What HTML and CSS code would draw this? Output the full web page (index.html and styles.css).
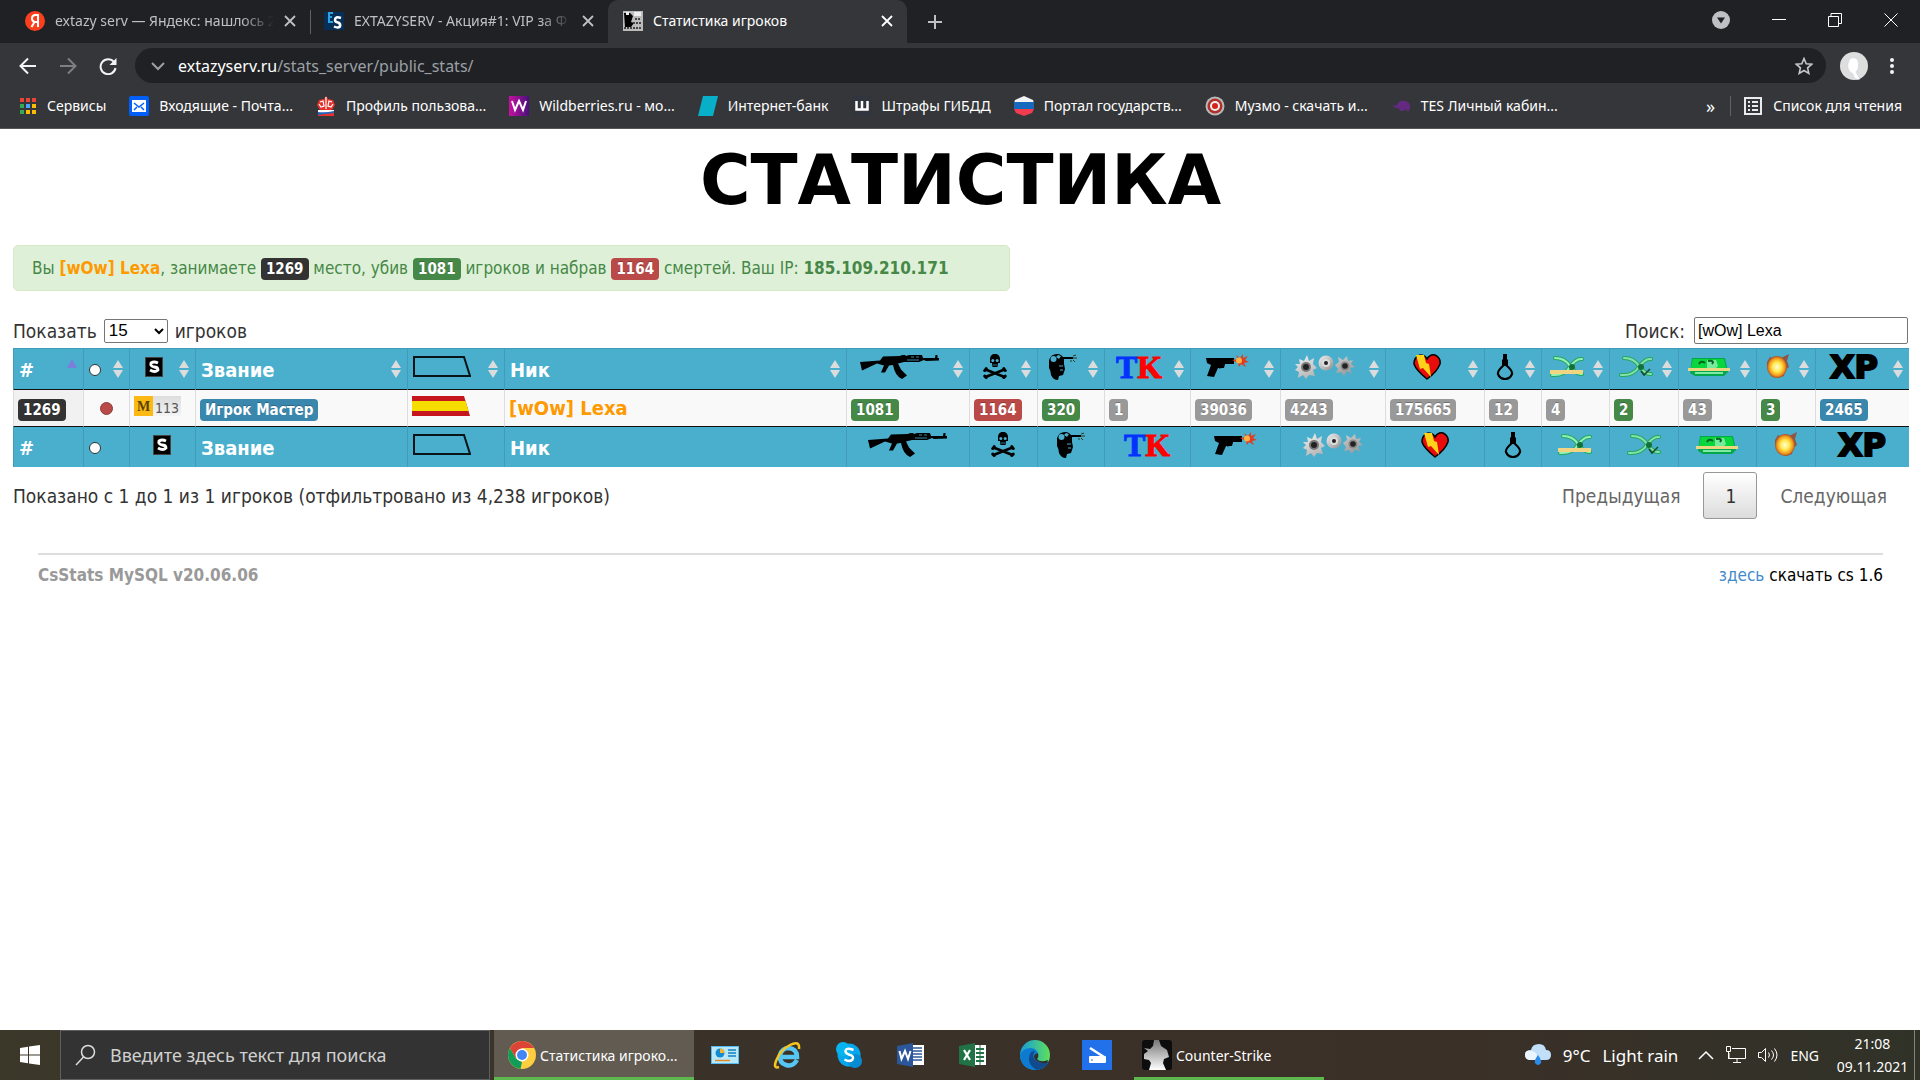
FILE: index.html
```html
<!DOCTYPE html>
<html lang="ru">
<head>
    <meta charset="UTF-8">
    <meta name="viewport" content="width=device-width, initial-scale=1.0">
    <title>Статистика игроков</title>
    <link rel="stylesheet" href="styles.css">
</head>
<body>
    <!-- Shared icons -->
    <svg class="sprite" aria-hidden="true">
        <defs>
            <linearGradient id="flash" x1="0" y1="0" x2="1" y2="1"><stop offset="0" stop-color="#f2f2f2"/><stop offset="1" stop-color="#8c8c8c"/></linearGradient>
            <radialGradient id="fire"><stop offset="0" stop-color="#fffde0"/><stop offset=".45" stop-color="#ffe94a"/><stop offset=".8" stop-color="#f2951c"/><stop offset="1" stop-color="#a3502c"/></radialGradient>
        </defs>
        <symbol id="close" viewBox="0 0 12 12"><path d="M1 1l10 10M11 1L1 11" stroke="currentColor" stroke-width="1.8"/></symbol>
        <symbol id="sort" viewBox="0 0 10 20"><path d="M5 1l5 8H0zM5 19l5-8H0z" fill="#dcdcdc"/></symbol>
        <symbol id="sort-asc" viewBox="0 0 10 20"><path d="M5 0l5 9H0z" fill="#7a7fdc"/></symbol>
        <symbol id="dot" viewBox="0 0 12 12"><circle cx="6" cy="6" r="5.5" fill="#fff" stroke="#333"/></symbol>
        <symbol id="steam" viewBox="0 0 18 20"><path fill="#444" d="M0 0h18v20H0z"/><path fill="#000" d="M1 1h16v18H1z"/><path d="M13 6q-4-2-7 0-1 3 3 4 4 0 4 3-3 3-8 0" fill="none" stroke="#fff" stroke-width="2.800"/></symbol>
        <symbol id="country" viewBox="0 0 58 21"><path d="M1 1h50l6 19H1z" fill="none" stroke="#081418" stroke-width="2"/></symbol>
        <symbol id="ak" viewBox="0 0 79 24"><path d="M0 7l20-1.500 3-4 17-.5L42 0h3l1 1 3-1h13l1 3h12l.5-3h2v3H79v2.500l-13 .5-2-1-5 2H44l-6 1.500 3 6 6 6-5 3.500q-7-3-9-14l-4 .5-4 7h-4l3-7-7-2L2 15.500z"/><path d="M51 2h3M56 2h3M47 5h12" stroke="#49afcd" stroke-width=".8"/></symbol>
        <symbol id="skull" viewBox="0 0 24 25"><path d="M7 5c0-7 10-7 10 0v4h-2l-.5 4h-5L9 9H7z"/><circle cx="9.800" cy="6.500" r="1.500" fill="#49afcd"/><circle cx="14.200" cy="6.500" r="1.500" fill="#49afcd"/><path d="M10 11h4M8 12.500q4 4 8 0" stroke="#49afcd" stroke-width=".7" fill="none"/><path d="M2.500 15.500l19 7.500M21.500 15.500l-19 7.500" stroke="#000" stroke-width="2.600" stroke-linecap="round"/><g><circle cx="1.800" cy="16.500" r="1.600"/><circle cx="3.200" cy="14.500" r="1.500"/><circle cx="22.200" cy="16.500" r="1.600"/><circle cx="20.800" cy="14.500" r="1.500"/><circle cx="1.800" cy="22" r="1.600"/><circle cx="3.200" cy="23.500" r="1.500"/><circle cx="22.200" cy="22" r="1.600"/><circle cx="20.800" cy="23.500" r="1.500"/></g></symbol>
        <symbol id="headshot" viewBox="0 0 28 26"><path d="M0 6q2-6 8-6 5 0 7 5l0 5 1 5-2 6-4 1-1 4q-5 0-7-5 0-4-2-7z"/><circle cx="4.500" cy="5" r="3" fill="#49afcd"/><path d="M7 3l2-2 3 1-2 3z" fill="#49afcd"/><path d="M10 12h4M11 16h3" stroke="#49afcd"/><path d="M13 4h11" stroke="#000" stroke-width="2"/><path d="M24 2l3-1M24 4h4M24 6l2 2M22 6v2" stroke="#2a3a1c"/></symbol>
        <symbol id="pistol" viewBox="0 0 45 25"><path d="M1 4h28v6h-9l-1 4h-6l-4 9-7-1 4-11-4-2z"/><path d="M19 10q0 4-5 4" fill="none" stroke="#000"/><path d="M27 6l6-1-2-4 4 3 3-4v4l5-2-3 4 4 2-5 1 2 4-5-3-2 3-1-4z" fill="#e03c22"/><circle cx="34" cy="6.500" r="3" fill="#ffb040"/></symbol>
        <symbol id="hit" viewBox="0 0 60 24"><path d="M0 9l5 0-1-5 5 2 3-6 2 6 5-3-1 6 4 4-4 2 2 6-6-1-3 4-3-4-5 3 1-6-4-2 3-3zM40 10l4-3-1-5 5 3 4-4 1 5 5-1-2 4 4 3-5 1 2 6-5-3-3 5-3-4-5 1 2-4z" fill="url(#flash)"/><circle cx="31" cy="8" r="7.500" fill="url(#flash)"/><circle cx="31" cy="8" r="4" fill="#ddd"/><circle cx="11" cy="12" r="5" fill="#777"/><circle cx="11" cy="12" r="3" fill="#222"/><circle cx="31" cy="8" r="2" fill="#222"/><circle cx="50" cy="11" r="4.500" fill="#888"/><circle cx="50" cy="11" r="2.800" fill="#222"/></symbol>
        <symbol id="heart" viewBox="0 0 28 26"><path d="M14 25Q3 16 1 10q0-7 6-9 5 0 7 4 3-5 8-4 6 3 5 9-3 8-13 15z" fill="#e80c0c" stroke="#000" stroke-width="1.500"/><path d="M3 1h8l2 8 3 1 2 13-8-9-3 1z" fill="#ffd31a"/></symbol>
        <symbol id="noose" viewBox="0 0 18 27"><path d="M7 1h4v5l1 1v6H6V7l1-1z"/><path d="M8 12q-7 6-6 9 2 5 7 5t7-5q1-3-6-9" fill="none" stroke="#000" stroke-width="2.200"/></symbol>
        <symbol id="plant" viewBox="0 0 34 22"><path d="M5 2q10 0 15 8 7 9 12 8M2 19q12 1 18-8 6-9 12-8" fill="none" stroke="#21a85a" stroke-width="4" stroke-linecap="round"/><path d="M5 2q10 0 15 8 7 9 12 8M2 19q12 1 18-8 6-9 12-8" fill="none" stroke="#96efb8" stroke-width="2" stroke-linecap="round"/><circle cx="22" cy="11" r="3" fill="#13703b"/><path d="M0 14h33v4H0z" fill="#f2d583"/></symbol>
        <symbol id="defuse" viewBox="0 0 34 22"><path d="M5 2q10 0 15 8 7 9 12 8M2 19q12 1 18-8 6-9 12-8" fill="none" stroke="#21a85a" stroke-width="4" stroke-linecap="round"/><path d="M5 2q10 0 15 8 7 9 12 8M2 19q12 1 18-8 6-9 12-8" fill="none" stroke="#86e0ad" stroke-width="2" stroke-linecap="round"/><circle cx="22" cy="11" r="3" fill="#13703b"/><path d="M22 15l3 4 6-6" fill="none" stroke="#174a2b" stroke-width="1.500"/></symbol>
        <symbol id="cash" viewBox="0 0 42 20"><path d="M4 1h33l3 14-4 4H7l-5-3z" fill="#04a84a"/><path d="M5 2h31l2 9H3z" fill="#08d63c"/><path d="M19 3h9l2 6-3 3h-8z" fill="#74eb9d"/><path d="M11 7q2-4 6-1M20 4q7-1 4 3" stroke="#066222" fill="none" stroke-width="2"/><path d="M7 16h28" stroke="#7deaa4" stroke-width="2"/><path d="M0 11h42v3H0z" fill="#ead782"/></symbol>
        <symbol id="explode" viewBox="0 0 24 25"><path d="M1 8l3-5 4 2 4-3 3 2 8-4-2 7 2 6-4 3-1 6-6 2-6-2-1-5-4-3z" fill="#8e5645"/><ellipse cx="11" cy="13" rx="10" ry="11" fill="url(#fire)"/></symbol>
    </svg>

    <header class="browser">
        <div class="tab-strip">
            <div class="tab">
                <svg width="20" height="20" viewBox="0 0 20 20"><circle cx="10" cy="10" r="10" fill="#fc3f1d"/><path d="M13 16V4h-2.500Q7 4 7 7.500q0 2.500 2.500 3.500L6.500 16M9.500 11H13" fill="none" stroke="#fff" stroke-width="2"/></svg>
                <span class="tab-title faded">extazy serv — Яндекс: нашлось 2</span>
                <button class="tab-close" aria-label="Закрыть"><svg width="12" height="12"><use href="#close"/></svg></button>
            </div>
            <div class="tab second">
                <svg width="20" height="20" viewBox="0 0 20 20"><path fill="#062f57" d="M0 1h20v18H0z"/><path d="M9 2H5v9h4M5 6h3" fill="none" stroke="#2ba2e2" stroke-width="2"/><path d="M17 7q-6-2-6 2 0 2 3 2.500 3 1 2 4-2 2-6 0" fill="none" stroke="#fff" stroke-width="2.500"/></svg>
                <span class="tab-title faded">EXTAZYSERV - Акция#1: VIP за Ф</span>
                <button class="tab-close" aria-label="Закрыть"><svg width="12" height="12"><use href="#close"/></svg></button>
            </div>
            <div class="tab active">
                <svg width="20" height="20" viewBox="0 0 20 20"><path fill="#bbb" d="M0 0h20v20H0z"/><path d="M1 2h6l3 3-2 6 3 1-3 4H2z"/><path d="M3 1h3v3H3zM11 1h7v4h-7z" fill="#eee"/><path d="M12 8h6M10 12h8M1 17h18" stroke="#444" stroke-width="2" stroke-dasharray="2 1"/></svg>
                <span class="tab-title">Статистика игроков</span>
                <button class="tab-close" aria-label="Закрыть"><svg width="12" height="12"><use href="#close"/></svg></button>
            </div>
            <button class="new-tab" aria-label="Новая вкладка"><svg width="16" height="16" viewBox="0 0 16 16"><path d="M8 1v14M1 8h14" stroke="#bdc1c6" stroke-width="2"/></svg></button>
            <div class="window-controls">
                <button aria-label="Поиск вкладок"><svg width="18" height="18" viewBox="0 0 18 18"><circle cx="9" cy="9" r="9" fill="#bdc1c6"/><path d="M5 6.500h8L9 12.500z" fill="#202124"/></svg></button>
                <button aria-label="Свернуть"><svg width="14" height="14" viewBox="0 0 14 14"><path d="M0 6.500h14" stroke="#fff" stroke-width="1"/></svg></button>
                <button aria-label="Восстановить"><svg width="14" height="14" viewBox="0 0 14 14"><path d="M.5 3.500h10v10H.5zM3 3V.5h10.500v10H11" fill="none" stroke="#fff"/></svg></button>
                <button aria-label="Закрыть окно"><svg width="14" height="14" viewBox="0 0 14 14"><path d="M.5.5l13 13m0-13l-13 13" stroke="#fff"/></svg></button>
            </div>
        </div>

        <div class="toolbar">
            <button aria-label="Назад"><svg width="18" height="18" viewBox="0 0 18 18"><path d="M17 9H2M9 1.500L1.500 9 9 16.500" fill="none" stroke="#f1f3f4" stroke-width="2"/></svg></button>
            <button aria-label="Вперёд"><svg width="18" height="18" viewBox="0 0 18 18"><path d="M1 9h15M9 1.500L16.500 9 9 16.500" fill="none" stroke="#7d7f83" stroke-width="2"/></svg></button>
            <button aria-label="Обновить"><svg width="18" height="18" viewBox="0 0 18 18"><path d="M15 5A7.500 7.500 0 1 0 16.500 11" fill="none" stroke="#f1f3f4" stroke-width="2"/><path d="M17.500 1v7h-7z" fill="#f1f3f4"/></svg></button>
            <a class="omnibox" href="#">
                <svg width="14" height="14" viewBox="0 0 14 14"><path d="M1 4l6 6 6-6" fill="none" stroke="#9aa0a6" stroke-width="2"/></svg>
                <span class="url"><b>extazyserv.ru</b>/stats_server/public_stats/</span>
                <svg width="18" height="18" viewBox="0 0 18 18"><path d="M9 1.500l2.200 5.200 5.600.5-4.200 3.700 1.200 5.500L9 13.500l-4.800 2.900 1.200-5.500L1.200 7.200l5.600-.5z" fill="none" stroke="#c4c7cc" stroke-width="1.600"/></svg>
            </a>
            <button aria-label="Профиль"><svg width="28" height="28" viewBox="0 0 28 28"><circle cx="14" cy="14" r="14" fill="#dedede"/><path d="M9 8q4-5 9 0 2 8-2 12l4 7q-6 2-7-5-8-4-4-14z" fill="#fff" stroke="#ccd4e0" stroke-width=".7"/></svg></button>
            <button aria-label="Меню"><svg width="4" height="18" viewBox="0 0 4 18"><circle cx="2" cy="3" r="2" fill="#f1f3f4"/><circle cx="2" cy="9" r="2" fill="#f1f3f4"/><circle cx="2" cy="15" r="2" fill="#f1f3f4"/></svg></button>
        </div>

        <nav class="bookmarks">
            <a href="#"><svg width="18" height="18" viewBox="0 0 18 18"><path fill="#ea4335" d="M1 1h4v4H1zM7 1h4v4H7zM13 1h4v4h-4z"/><path fill="#34a853" d="M1 7h4v4H1zM1 13h4v4H1z"/><path fill="#4aa3ff" d="M7 7h4v4H7z"/><path fill="#fbbc04" d="M13 7h4v4h-4zM7 13h4v4H7zM13 13h4v4h-4z"/></svg>Сервисы</a>
            <a href="#"><svg width="20" height="20" viewBox="0 0 20 20"><rect width="20" height="20" rx="2" fill="#005ff9"/><path fill="#fff" d="M3 4h14v12H3z"/><path d="M5 7l5 4 5-4M5 14l3-3M15 14l-3-3" fill="none" stroke="#005ff9" stroke-width="1.500"/></svg>Входящие - Почта...</a>
            <a href="#"><svg width="20" height="20" viewBox="0 0 20 20"><path d="M10 0l2 3 5 1 2 5-3 5H4L1 9l2-5 5-1z" fill="#e5332c"/><path d="M10 1v12M4 6l3-1 1 5-3 1-2-3M16 6l-3-1-1 5 3 1 2-3" fill="none" stroke="#fff" stroke-width="1.200"/><path d="M2 14h16v2l-16 2z" fill="#fff"/><path d="M2 16q8 1 16-1v3q-8 0-16 1z" fill="#2764ba"/><path d="M2 19l16-2v3H2z" fill="#e5332c"/></svg>Профиль пользова...</a>
            <a href="#"><svg width="20" height="20" viewBox="0 0 20 20"><defs><linearGradient id="wb"><stop offset="0" stop-color="#c610a0"/><stop offset="1" stop-color="#49107b"/></linearGradient></defs><path fill="url(#wb)" d="M0 0h20v20H0z"/><path d="M3 5l3 9 4-9 4 9 3-9" fill="none" stroke="#fff" stroke-width="2"/></svg>Wildberries.ru - мо...</a>
            <a href="#"><svg width="20" height="20" viewBox="0 0 20 20"><path fill="#08afc9" d="M5 0h15l-5 20H0z"/></svg>Интернет-банк</a>
            <a href="#"><svg width="20" height="20" viewBox="0 0 20 20"><rect width="20" height="20" rx="3" fill="#30353e"/><path d="M4.500 5v8.500h11V5M10 5v8" fill="none" stroke="#fff" stroke-width="2.500"/></svg>Штрафы ГИБДД</a>
            <a href="#"><svg width="20" height="20" viewBox="0 0 20 20"><path d="M10 0l9 4 1 3H0l1-3z" fill="#f4f4f4"/><path fill="#1769bd" d="M0 6h20v7H0z"/><path d="M0 13h20l-2 4-8 3-8-3z" fill="#ef3d4f"/></svg>Портал государств...</a>
            <a href="#"><svg width="20" height="20" viewBox="0 0 20 20"><circle cx="10" cy="10" r="9.500" fill="#b9b9b9"/><circle cx="10" cy="10" r="7.500" fill="#b2302a"/><circle cx="10" cy="10" r="5" fill="#eee"/><circle cx="10" cy="10" r="3" fill="#d4211c"/></svg>Музмо - скачать и...</a>
            <a href="#"><svg width="20" height="20" viewBox="0 0 20 20"><path d="M1 7q1 4 5 2 2-5 8-4 6 1 5 7l-1 3h-2l-1-2-3 2h-3l-1-3q-6 1-7-5z" fill="#642a82"/></svg>TES Личный кабин...</a>
            <button class="more" aria-label="Другие закладки">»</button>
            <a class="reading-list" href="#"><svg width="20" height="20" viewBox="0 0 20 20"><path d="M2 2h16v16H2zM5 6h2M5 10h2M5 14h2M9 6h6M9 10h6M9 14h6" fill="none" stroke="#e8eaed" stroke-width="2"/></svg>Список для чтения</a>
        </nav>
    </header>

    <main>
        <h1>СТАТИСТИКА</h1>

        <div class="alert">
            Вы <strong class="nick">[wOw] Lexa</strong>, занимаете <span class="label black">1269</span> место, убив <span class="label green">1081</span> игроков и набрав <span class="label red">1164</span> смертей. Ваш IP: <strong>185.109.210.171</strong>
        </div>

        <div class="table-controls">
            <label>Показать
                <select>
                    <option>15</option>
                    <option>50</option>
                </select>
                игроков</label>
            <label>Поиск: <input type="text" value="[wOw] Lexa"></label>
        </div>

        <table>
            <colgroup>
                <col class="w-place"><col class="w-online"><col class="w-steam"><col class="w-rank"><col class="w-flag"><col class="w-nick"><col class="w-kills"><col class="w-deaths"><col class="w-heads"><col class="w-tk"><col class="w-shots"><col class="w-hits"><col class="w-damage"><col class="w-suicide"><col class="w-defusing"><col class="w-defused"><col class="w-planted"><col class="w-explode"><col class="w-xp">
            </colgroup>
            <thead>
                <tr>
                    <th><button><span class="name">#</span><svg class="arrow"><use href="#sort-asc"/></svg></button></th>
                    <th><button><span class="name"><svg width="12" height="12"><use href="#dot"/></svg></span><svg class="arrow"><use href="#sort"/></svg></button></th>
                    <th><button><span class="icon"><svg width="18" height="20"><use href="#steam"/></svg></span><svg class="arrow"><use href="#sort"/></svg></button></th>
                    <th><button><span class="name">Звание</span><svg class="arrow"><use href="#sort"/></svg></button></th>
                    <th><button><span class="name flag"><svg width="58" height="21"><use href="#country"/></svg></span><svg class="arrow"><use href="#sort"/></svg></button></th>
                    <th><button><span class="name">Ник</span><svg class="arrow"><use href="#sort"/></svg></button></th>
                    <th><button><span class="icon"><svg width="79" height="24"><use href="#ak"/></svg></span><svg class="arrow"><use href="#sort"/></svg></button></th>
                    <th><button><span class="icon"><svg width="24" height="25"><use href="#skull"/></svg></span><svg class="arrow"><use href="#sort"/></svg></button></th>
                    <th><button><span class="icon"><svg width="28" height="26"><use href="#headshot"/></svg></span><svg class="arrow"><use href="#sort"/></svg></button></th>
                    <th><button><span class="icon tk"><i>T</i>K</span><svg class="arrow"><use href="#sort"/></svg></button></th>
                    <th><button><span class="icon"><svg width="45" height="25"><use href="#pistol"/></svg></span><svg class="arrow"><use href="#sort"/></svg></button></th>
                    <th><button><span class="icon"><svg width="60" height="24"><use href="#hit"/></svg></span><svg class="arrow"><use href="#sort"/></svg></button></th>
                    <th><button><span class="icon"><svg width="28" height="26"><use href="#heart"/></svg></span><svg class="arrow"><use href="#sort"/></svg></button></th>
                    <th><button><span class="icon"><svg width="18" height="27"><use href="#noose"/></svg></span><svg class="arrow"><use href="#sort"/></svg></button></th>
                    <th><button><span class="icon"><svg width="34" height="22"><use href="#plant"/></svg></span><svg class="arrow"><use href="#sort"/></svg></button></th>
                    <th><button><span class="icon"><svg width="34" height="22"><use href="#defuse"/></svg></span><svg class="arrow"><use href="#sort"/></svg></button></th>
                    <th><button><span class="icon"><svg width="42" height="20"><use href="#cash"/></svg></span><svg class="arrow"><use href="#sort"/></svg></button></th>
                    <th><button><span class="icon"><svg width="24" height="25"><use href="#explode"/></svg></span><svg class="arrow"><use href="#sort"/></svg></button></th>
                    <th><button><span class="icon xp">XP</span><svg class="arrow"><use href="#sort"/></svg></button></th>
                </tr>
            </thead>
            <tbody>
                <tr>
                    <td class="sorted"><span class="label black">1269</span></td>
                    <td class="online"><svg width="13" height="13" viewBox="0 0 13 13"><circle cx="6.500" cy="6.500" r="6" fill="#b94a48" stroke="#8d3c3a"/></svg></td>
                    <td><span class="skill"><b>M</b>113</span></td>
                    <td><span class="label blue">Игрок Мастер</span></td>
                    <td><svg class="spain" width="58" height="20" viewBox="0 0 58 20"><path d="M0 0h52l6 20H0z" fill="#c4161c"/><path d="M0 5h53.500l3 10H0z" fill="#f5dd00"/></svg></td>
                    <td><strong class="nick">[wOw] Lexa</strong></td>
                    <td><span class="label green">1081</span></td>
                    <td><span class="label red">1164</span></td>
                    <td><span class="label green">320</span></td>
                    <td><span class="label">1</span></td>
                    <td><span class="label">39036</span></td>
                    <td><span class="label">4243</span></td>
                    <td><span class="label">175665</span></td>
                    <td><span class="label">12</span></td>
                    <td><span class="label">4</span></td>
                    <td><span class="label green">2</span></td>
                    <td><span class="label">43</span></td>
                    <td><span class="label green">3</span></td>
                    <td><span class="label blue">2465</span></td>
                </tr>
            </tbody>
            <tfoot>
                <tr>
                    <th><div><span class="name">#</span></div></th>
                    <th><div><span class="name"><svg width="12" height="12"><use href="#dot"/></svg></span></div></th>
                    <th><div><span class="icon"><svg width="18" height="20"><use href="#steam"/></svg></span></div></th>
                    <th><div><span class="name">Звание</span></div></th>
                    <th><div><span class="name flag"><svg width="58" height="21"><use href="#country"/></svg></span></div></th>
                    <th><div><span class="name">Ник</span></div></th>
                    <th><div><span class="icon"><svg width="79" height="24"><use href="#ak"/></svg></span></div></th>
                    <th><div><span class="icon"><svg width="24" height="25"><use href="#skull"/></svg></span></div></th>
                    <th><div><span class="icon"><svg width="28" height="26"><use href="#headshot"/></svg></span></div></th>
                    <th><div><span class="icon tk"><i>T</i>K</span></div></th>
                    <th><div><span class="icon"><svg width="45" height="25"><use href="#pistol"/></svg></span></div></th>
                    <th><div><span class="icon"><svg width="60" height="24"><use href="#hit"/></svg></span></div></th>
                    <th><div><span class="icon"><svg width="28" height="26"><use href="#heart"/></svg></span></div></th>
                    <th><div><span class="icon"><svg width="18" height="27"><use href="#noose"/></svg></span></div></th>
                    <th><div><span class="icon"><svg width="34" height="22"><use href="#plant"/></svg></span></div></th>
                    <th><div><span class="icon"><svg width="34" height="22"><use href="#defuse"/></svg></span></div></th>
                    <th><div><span class="icon"><svg width="42" height="20"><use href="#cash"/></svg></span></div></th>
                    <th><div><span class="icon"><svg width="24" height="25"><use href="#explode"/></svg></span></div></th>
                    <th><div><span class="icon xp">XP</span></div></th>
                </tr>
            </tfoot>
        </table>

        <div class="table-footer">
            <div class="info">Показано с 1 до 1 из 1 игроков (отфильтровано из 4,238 игроков)</div>
            <div class="pagination">
                <button>Предыдущая</button>
                <button class="current">1</button>
                <button>Следующая</button>
            </div>
        </div>

        <footer>
            <strong>CsStats MySQL v20.06.06</strong>
            <span><a href="#">здесь</a> скачать cs 1.6</span>
        </footer>
    </main>

    <div class="taskbar">
        <button class="start" aria-label="Пуск"><svg width="20" height="20" viewBox="0 0 20 20"><path fill="#fff" d="M0 3l8-1.200v7.700H0zM9 1.600L20 0v9.500H9zM0 10.500h8v7.700L0 17zM9 10.500h11V20L9 18.400z"/></svg></button>
        <label class="task-search">
            <svg width="22" height="22" viewBox="0 0 22 22"><circle cx="13" cy="8" r="6.500" fill="none" stroke="#ddd" stroke-width="1.500"/><path d="M8.500 13L1 21" stroke="#ddd" stroke-width="1.500"/></svg>
            <input type="text" placeholder="Введите здесь текст для поиска" aria-label="Поиск">
        </label>
        <button class="task-window chrome">
            <svg width="28" height="28" viewBox="0 0 28 28"><circle cx="14" cy="14" r="14" fill="#ffcd40"/><path d="M1.900 7A14 14 0 0 1 26.100 7H14L8 17.500z" fill="#db4437"/><path d="M1.900 7L8 17.500 14 21l-1.500 6.900A14 14 0 0 1 1.900 7z" fill="#0f9d58"/><circle cx="14" cy="14" r="6.500" fill="#fff"/><circle cx="14" cy="14" r="5" fill="#4285f4"/></svg>
            Статистика игроко...
        </button>
        <div class="pinned">
            <button aria-label="Панель управления"><svg width="30" height="30" viewBox="0 0 30 30"><path fill="#51bdf0" d="M1 6h28v18H1z"/><path fill="#b9e8fa" d="M2 7h26v16H2z"/><circle cx="10" cy="13" r="4.500" fill="#178bd0"/><path d="M10 8.500V13h4.500A4.500 4.500 0 0 0 10 8.500z" fill="#f6b52b"/><path d="M18 10h8M18 13h8M18 16h8" stroke="#1580bf" stroke-width="1.500"/><path d="M5 20.500h15" stroke="#e08c2c" stroke-width="1.500"/></svg></button>
            <button aria-label="Internet Explorer"><svg width="30" height="30" viewBox="0 0 30 30"><path d="M25 20q-4 7-11 5-7-2-6-10 2-7 9-7 8 1 8 9H9" fill="none" stroke="#56c6f2" stroke-width="4.500"/><path d="M7 27q-6 2-3-6Q8 10 18 5q10-5 9 4" fill="none" stroke="#f7c51e" stroke-width="2.500"/></svg></button>
            <button aria-label="Skype"><svg width="30" height="30" viewBox="0 0 30 30"><circle cx="15" cy="15" r="11.500" fill="#06a7ec"/><circle cx="9" cy="9" r="7" fill="#06b5f0"/><circle cx="21" cy="21" r="7" fill="#078bd2"/><path d="M19.500 10q-8-3-8 1.500 0 2 4 3.200 5 1.300 3 4.800-3 3-8 0" fill="none" stroke="#fff" stroke-width="2.500"/></svg></button>
            <button aria-label="Word"><svg width="30" height="30" viewBox="0 0 30 30"><path fill="#fff" d="M15 5h13v20H15z"/><path d="M17 8h9M17 11h9M17 14h9M17 17h9M17 20h9" stroke="#2b579a" stroke-width="1.500"/><path fill="#2b579a" d="M1 6l16-3v24L1 24z"/><path d="M3.500 11l2 8L9 11l3 8 2.500-8" fill="none" stroke="#fff" stroke-width="2"/></svg></button>
            <button aria-label="Excel"><svg width="30" height="30" viewBox="0 0 30 30"><path fill="#fff" d="M15 5h13v20H15z"/><path d="M18 9h8M18 13h8M18 17h8M18 21h8" stroke="#217346" stroke-width="2"/><path fill="#217346" d="M1 6l16-3v24L1 24zM21.500 5h1v20h-1z"/><path d="M6 10l6 10M12 10L6 20" stroke="#fff" stroke-width="2.200"/></svg></button>
            <button aria-label="Edge"><svg width="30" height="30" viewBox="0 0 30 30"><defs><linearGradient id="edge"><stop offset="0" stop-color="#159bdd"/><stop offset="1" stop-color="#5fe05a"/></linearGradient></defs><circle cx="15" cy="15" r="15" fill="url(#edge)"/><path d="M0 15Q3 8 11 8q7 1 7 7-3 2-1 5 5 4 12 1-4 9-14 9Q1 29 0 15z" fill="#0c7bd0"/><path d="M10 14q-4 10 7 16 8-1 12-9-7 4-13 0-5-4-1-10-4 0-5 3z" fill="#104b8f"/><path d="M14 17q0-3 4-4 1 4-1 6 3 4 11 1l-1 3q-11 1-13-6z" fill="#342e28"/></svg></button>
            <button aria-label="Сканер"><svg width="30" height="30" viewBox="0 0 30 30"><path fill="#2270ea" d="M0 0h30v30H0z"/><path d="M8 8l14 9" stroke="#fff" stroke-width="2.500"/><rect x="7" y="16" width="17" height="7" rx="1" fill="#fff"/><path d="M9 20h2" stroke="#2270ea"/></svg></button>
        </div>
        <button class="task-window game">
            <svg width="30" height="30" viewBox="0 0 30 30"><defs><linearGradient id="cs" x1="0" y1="0" x2="0" y2="1"><stop offset="0" stop-color="#777"/><stop offset="1" stop-color="#fff"/></linearGradient></defs><rect width="30" height="30" rx="3" fill="#0d0d0d"/><path d="M12 0h5l2 6 6 4 2 7-5 2-1 4 3 7H7l2-7-2-3-5-1 0-5 4-3-4-3 6 1 3-3z" fill="url(#cs)"/></svg>
            Counter-Strike
        </button>
        <div class="tray">
            <svg width="26" height="22" viewBox="0 0 26 22"><path d="M6 16q-6 0-6-5t6-5q1-6 8-6 6 0 7 6 5 0 5 5t-5 5z" fill="#c2dffa"/><path d="M6 16q-6 0-6-5t6-4q5 0 6 5l5 4z" fill="#eaf5ff"/><path d="M13 11q4 5 3 8-3 4-6 0-1-3 3-8z" fill="#2d8be8"/></svg>
            <span class="weather">9°C</span>
            <span class="weather rain">Light rain</span>
            <svg width="16" height="10" viewBox="0 0 16 10"><path d="M1 9l7-7 7 7" fill="none" stroke="#fff" stroke-width="1.500"/></svg>
            <svg width="20" height="18" viewBox="0 0 20 18"><path d="M6 2.500h13.500v10H3V7M11 13v3M7 16.500h8M.5.500h4v5h-4zM2.500 5v8" fill="none" stroke="#fff"/></svg>
            <svg width="20" height="18" viewBox="0 0 20 18"><path d="M.5 6.500h3l4-4v13l-4-4h-3zM10.500 6.500q2 2.500 0 5M13.500 4.500q4 4.500 0 9M16.500 2.500q5 6.500 0 13" fill="none" stroke="#fff"/></svg>
            <span>ENG</span>
            <div class="clock">21:08<br>09.11.2021</div>
        </div>
    </div>
</body>
</html>
```
FILE: styles.css
```css
* {
    box-sizing: border-box;
}

body {
    margin: 0;
    min-height: 100vh;
    display: flex;
    flex-direction: column;
    background-color: #fff;
    color: #333;
    font-family: "DejaVu Sans Condensed", "DejaVu Sans", sans-serif;
    font-size: 19px;
}

button {
    font: inherit;
    color: inherit;
    background: none;
    border: none;
    padding: 0;
    cursor: pointer;
}

svg {
    display: block;
    flex-shrink: 0;
}

a {
    color: #428bca;
    text-decoration: none;
}

.sprite {
    position: absolute;
    width: 0;
    height: 0;
}

/* Browser window */
.browser {
    background-color: #35363a;
    color: #fff;
    font-family: "Noto Sans", sans-serif;
    font-size: 14px;
    border-bottom: 1px solid #55565a;
}

.tab-strip {
    display: flex;
    height: 43px;
    background-color: #202124;
}

.tab {
    display: flex;
    align-items: center;
    gap: 10px;
    width: 310px;
    padding: 0 14px 2px 25px;
    color: #bdc1c6;
}

.tab.second {
    width: 298px;
    padding-left: 14px;
    background: linear-gradient(#5f6368, #5f6368) 0 10px / 1px 24px no-repeat;
}

.tab.active {
    width: 299px;
    padding-left: 15px;
    background-color: #35363a;
    border-radius: 10px 10px 0 0;
    color: #fff;
}

.tab-title {
    flex: 1;
    min-width: 0;
    overflow: hidden;
    white-space: nowrap;
}

.faded {
    mask-image: linear-gradient(to right, #000 85%, transparent);
}

.new-tab {
    padding: 0 20px;
}

.window-controls {
    display: flex;
    align-items: center;
    gap: 42px;
    margin-left: auto;
    padding: 0 22px 4px 0;
}

.toolbar {
    display: flex;
    align-items: center;
    gap: 22px;
    height: 45px;
    padding: 0 26px 0 19px;
}

.omnibox {
    flex: 1;
    display: flex;
    align-items: center;
    gap: 13px;
    height: 35px;
    padding: 0 13px 0 16px;
    margin: 0 -8px 0 -4px;
    border-radius: 18px;
    background-color: #202124;
}

.url {
    flex: 1;
    color: #9aa0a6;
    font-size: 16px;
}

.url b {
    color: #fff;
    font-weight: normal;
}

.bookmarks {
    display: flex;
    align-items: center;
    gap: 23px;
    height: 40px;
    padding: 0 18px 5px 19px;
    white-space: nowrap;
}

.bookmarks a {
    display: flex;
    align-items: center;
    gap: 10px;
    color: #fff;
}

.more {
    margin: 0 -8px 0 auto;
    font-size: 18px;
}

.bookmarks .reading-list {
    padding-left: 12px;
    border-left: 1px solid #5f6368;
}

/* Page */
main {
    flex: 1;
    padding: 0 12px 0 13px;
}

h1 {
    margin: 0;
    padding: 11px 0 25px;
    text-align: center;
    color: #000;
    font-family: "DejaVu Sans", sans-serif;
    font-size: 69px;
    line-height: 80px;
}

.alert {
    width: 997px;
    max-width: 100%;
    padding: 0 18px;
    line-height: 44px;
    font-size: 17px;
    color: #468847;
    background-color: #dff0d8;
    border: 1px solid #d6e9c6;
    border-radius: 5px;
}

.nick {
    color: #ff9900;
}

.label {
    display: inline-block;
    padding: 0 5px;
    border-radius: 4px;
    background-color: #999;
    color: #fff;
    font-size: 15px;
    font-weight: bold;
    line-height: 22px;
    text-shadow: 0 -1px 0 rgba(0, 0, 0, 0.25);
    white-space: nowrap;
}

.black { background-color: #333; }
.green { background-color: #468847; }
.red { background-color: #b94a48; }
.blue { background-color: #3a87ad; }

.table-controls {
    display: flex;
    justify-content: space-between;
    align-items: flex-end;
    height: 57px;
    padding-bottom: 2px;
}

.table-controls label {
    display: flex;
    align-items: center;
    gap: 7px;
    height: 31px;
}

select {
    width: 64px;
    height: 24px;
    font: 17px "Liberation Sans", sans-serif;
    color: #000;
    background-color: #fff;
    border: 1px solid #767676;
    border-radius: 2px;
}

.table-controls input {
    width: 214px;
    height: 27px;
    margin-left: 2px;
    padding: 0 3px;
    font: 16px "Liberation Sans", sans-serif;
    color: #000;
    border: 1px solid #767676;
    border-radius: 2px;
}

table {
    width: 100%;
    table-layout: fixed;
    border-collapse: separate;
    border-spacing: 0;
}

.w-place { width: 70px; }
.w-online { width: 46px; }
.w-steam { width: 66px; }
.w-rank { width: 212px; }
.w-flag { width: 97px; }
.w-nick { width: 342px; }
.w-kills { width: 123px; }
.w-deaths { width: 68px; }
.w-heads { width: 67px; }
.w-tk { width: 86px; }
.w-shots { width: 90px; }
.w-hits { width: 105px; }
.w-damage { width: 99px; }
.w-suicide { width: 57px; }
.w-defusing { width: 68px; }
.w-defused { width: 69px; }
.w-planted { width: 78px; }
.w-explode { width: 59px; }
.w-xp { width: 94px; }

th {
    padding: 0;
    background-color: #49afcd;
    border-left: 1px solid #409cb8;
    color: #fff;
    font-size: 20px;
}

thead th {
    border-top: 1px solid #409cb8;
}

th button,
th div {
    display: flex;
    align-items: center;
    width: 100%;
    height: 40px;
    padding: 0 6px 0 5px;
    font-weight: bold;
}

.name {
    flex: 1;
    text-align: left;
    padding-top: 1px;
}

.name.flag {
    padding: 0 0 5px;
}

.icon {
    flex: 1;
    display: flex;
    justify-content: center;
    padding-bottom: 5px;
}

thead .icon {
    padding-right: 6px;
}

.arrow {
    width: 10px;
    height: 20px;
}

.tk {
    color: #f00;
    font: bold 32px/24px "Liberation Serif", serif;
    -webkit-text-stroke: 1px currentColor;
}

.tk i {
    color: #0433ff;
    font-style: normal;
}

.xp {
    color: #000;
    font: bold 32px/24px "DejaVu Sans", sans-serif;
    -webkit-text-stroke: 2px #000;
}

td {
    height: 38px;
    padding: 0 4px;
    background-color: #f9f9f9;
    border: solid #111;
    border-width: 1px 0;
    border-left: 1px solid #ddd;
    font-size: 20px;
    line-height: 24px;
}

td .label {
    vertical-align: middle;
    margin-top: 4px;
}

td.sorted {
    background-color: #f1f1f1;
}

.online svg {
    margin: 0 auto;
}

.spain {
    margin-bottom: 5px;
}

.skill {
    display: flex;
    gap: 2px;
    width: 47px;
    height: 20px;
    margin-bottom: 5px;
    background: linear-gradient(#ddd, #f4f4f4);
    color: #555;
    font-size: 14px;
    line-height: 24px;
}

.skill b {
    width: 19px;
    background-color: #fdb913;
    color: #5a4300;
    font-family: "Liberation Serif", serif;
    line-height: 22px;
    text-align: center;
}

.table-footer {
    display: flex;
    justify-content: space-between;
    align-items: center;
    padding-top: 5px;
}

.pagination {
    display: flex;
    gap: 2px;
    color: #666;
}

.pagination button {
    height: 47px;
    padding: 0 21px;
}

.pagination .current {
    width: 54px;
    color: #333;
    background: linear-gradient(#fff, #dcdcdc);
    border: 1px solid #979797;
    border-radius: 3px;
}

footer {
    display: flex;
    justify-content: space-between;
    margin: 34px 25px 0;
    padding-top: 10px;
    border-top: 2px solid #ddd;
    font-size: 17px;
    color: #000;
}

footer strong {
    color: #999;
}

/* Windows taskbar */
.taskbar {
    display: flex;
    align-items: stretch;
    height: 50px;
    background: linear-gradient(to right, #3b3729, #3a3128 45%, #3b3028 75%, #303228);
    color: #fff;
    font-family: "Noto Sans", sans-serif;
    font-size: 14px;
}

.start {
    padding: 0 20px;
}

.task-search {
    display: flex;
    align-items: center;
    gap: 13px;
    width: 430px;
    padding: 0 14px;
    background-color: #333;
    border: 1px solid #5f5f5f;
}

.task-search input {
    flex: 1;
    padding: 0;
    border: none;
    outline: none;
    background: none;
    color: #fff;
    font: 18px "Noto Sans", sans-serif;
}

.task-search input::placeholder {
    color: #d0d0d0;
}

.task-window {
    display: flex;
    align-items: center;
    gap: 4px;
    padding: 3px 8px 0;
    border-bottom: 3px solid #5cb84c;
    white-space: nowrap;
}

.chrome {
    width: 200px;
    margin-left: 4px;
    padding-left: 14px;
    background-color: #615b52;
}

.game {
    width: 190px;
}

.pinned {
    display: flex;
    align-items: center;
    gap: 32px;
    padding: 0 22px 0 16px;
}

.tray {
    display: flex;
    align-items: center;
    gap: 12px;
    margin: 0 5px 0 auto;
    border-right: 1px solid #85827a;
}

.weather {
    font-size: 17px;
}

.rain {
    margin-right: 8px;
}

.clock {
    width: 83px;
    text-align: center;
    line-height: 23px;
}
```
